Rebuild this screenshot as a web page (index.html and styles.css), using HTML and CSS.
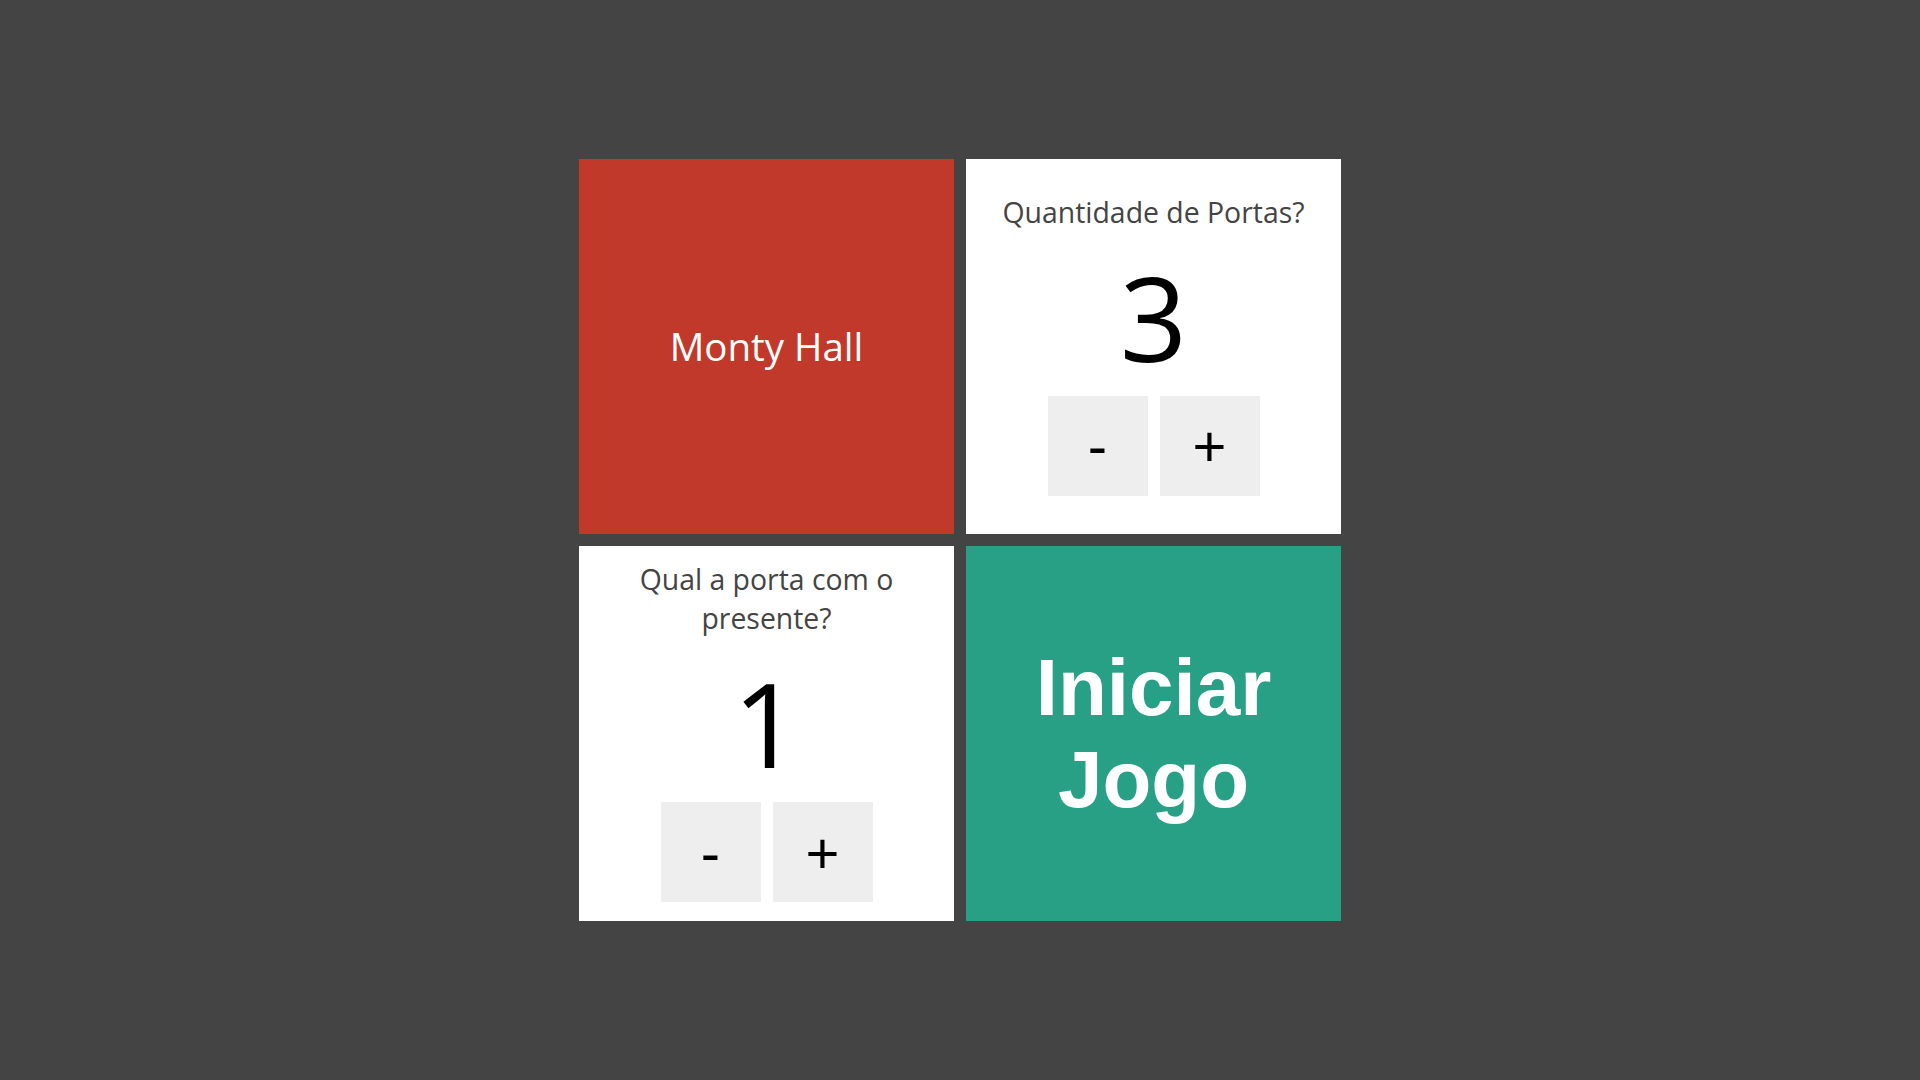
FILE: index.html
```html
<!DOCTYPE html>
<html lang="pt">
<head>
<meta charset="utf-8">
<title>Monty Hall</title>
<link rel="stylesheet" href="styles.css">
</head>
<body>
<main class="page">
  <div class="board">
    <div class="card card-title">
      <h1 class="brand">Monty Hall</h1>
    </div>
    <div class="card card-input">
      <span class="label">Quantidade de Portas?</span>
      <span class="value">3</span>
      <div class="buttons">
        <button class="btn">-</button>
        <button class="btn">+</button>
      </div>
    </div>
    <div class="card card-input">
      <span class="label">Qual a porta com o presente?</span>
      <span class="value">1</span>
      <div class="buttons">
        <button class="btn">-</button>
        <button class="btn">+</button>
      </div>
    </div>
    <button class="card card-start">Iniciar Jogo</button>
  </div>
</main>
</body>
</html>
```
FILE: styles.css
```css
html, body {
  margin: 0;
  padding: 0;
  height: 100%;
}
body {
  background: #444444;
  font-family: "Open Sans", "Noto Sans", sans-serif;
}
.page {
  height: 100vh;
  display: flex;
  align-items: center;
  justify-content: center;
}
.board {
  display: grid;
  grid-template-columns: 375px 375px;
  grid-template-rows: 375px 375px;
  gap: 12px;
}
.card {
  display: flex;
  flex-direction: column;
  align-items: center;
  justify-content: center;
  box-sizing: border-box;
  width: 375px;
  height: 375px;
  margin: 0;
  border: none;
}
.card-title {
  background: #c0392b;
}
.brand {
  margin: 0;
  color: #ffffff;
  font-weight: 400;
  font-size: 38.5px;
  line-height: 1.2;
}
.card-input {
  background: #ffffff;
  padding: 0 30px;
}
.label {
  color: #444444;
  font-size: 28.4px;
  line-height: 39px;
  text-align: center;
  margin-top: -5px;
  margin-bottom: 5px;
}
.value {
  color: #000000;
  font-size: 118px;
  line-height: 159px;
  font-weight: 400;
}
.buttons {
  display: flex;
  gap: 12px;
}
.btn {
  width: 100px;
  height: 100px;
  border: none;
  background: #eeeeee;
  color: #000000;
  font-family: "Liberation Sans", Arial, sans-serif;
  font-size: 58px;
  padding: 0;
}
.card-start {
  background: #28a086;
  color: #ffffff;
  font-family: "Liberation Sans", Arial, sans-serif;
  font-weight: 700;
  font-size: 80px;
  line-height: 92px;
  text-align: center;
  padding: 0 30px;
}
```
